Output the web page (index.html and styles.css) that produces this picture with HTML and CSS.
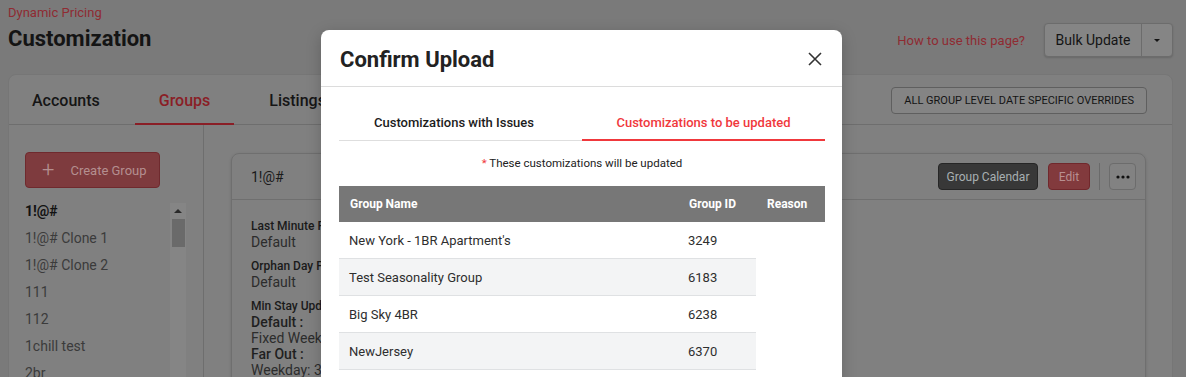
FILE: index.html
```html
<!DOCTYPE html>
<html lang="en">
<head>
    <meta charset="UTF-8">
    <meta name="viewport" content="width=device-width, initial-scale=1.0">
    <title>Customization</title>
    <link rel="stylesheet" href="styles.css">
</head>
<body>
    <div class="page">
        <div class="page-header">
            <div>
                <div class="crumb">Dynamic Pricing</div>
                <h1>Customization</h1>
            </div>
            <div class="header-actions">
                <a class="help-link" href="#">How to use this page?</a>
                <div class="split-btn">
                    <button class="split-main">Bulk Update</button>
                    <button class="split-caret"><span class="caret"></span></button>
                </div>
            </div>
        </div>

        <div class="main-card">
            <div class="tabs">
                <div class="tab">Accounts</div>
                <div class="tab active">Groups</div>
                <div class="tab">Listings</div>
                <button class="override-btn">All Group Level Date Specific Overrides</button>
            </div>
            <div class="main-body">
                <div class="sidebar">
                    <button class="create-btn"><span class="plus">+</span>Create Group</button>
                    <div class="group-list">
                        <ul>
                            <li class="selected">1!@#</li>
                            <li>1!@# Clone 1</li>
                            <li>1!@# Clone 2</li>
                            <li>111</li>
                            <li>112</li>
                            <li>1chill test</li>
                            <li>2br</li>
                        </ul>
                        <div class="scrollbar">
                            <span class="scroll-up"></span>
                            <span class="scroll-thumb"></span>
                        </div>
                    </div>
                </div>
                <div class="content">
                    <div class="group-card">
                        <div class="group-card-header">
                            <span>1!@#</span>
                            <div class="group-actions">
                                <button class="btn-dark">Group Calendar</button>
                                <button class="btn-red">Edit</button>
                                <span class="vsep"></span>
                                <button class="btn-more">
                                    <svg width="14" height="4" viewBox="0 0 14 4">
                                        <circle cx="2" cy="2" r="1.6" fill="#111"/>
                                        <circle cx="7" cy="2" r="1.6" fill="#111"/>
                                        <circle cx="12" cy="2" r="1.6" fill="#111"/>
                                    </svg>
                                </button>
                            </div>
                        </div>
                        <div class="group-card-body">
                            <div class="field-label">Last Minute Prices</div>
                            <div class="field-value">Default</div>
                            <div class="field-label">Orphan Day Prices</div>
                            <div class="field-value">Default</div>
                            <div class="field-label">Min Stay Updates</div>
                            <div class="field-value strong">Default :</div>
                            <div class="field-value">Fixed Weekday</div>
                            <div class="field-value strong">Far Out :</div>
                            <div class="field-value">Weekday: 3</div>
                        </div>
                    </div>
                </div>
            </div>
        </div>
    </div>

    <div class="modal">
        <div class="modal-header">
            <h2>Confirm Upload</h2>
            <svg class="close" width="14" height="14" viewBox="0 0 14 14">
                <path d="M1 1 L13 13 M13 1 L1 13" stroke="#333" stroke-width="1.6" fill="none"/>
            </svg>
        </div>
        <div class="modal-body">
            <div class="modal-tabs">
                <div class="modal-tab">Customizations with Issues</div>
                <div class="modal-tab active">Customizations to be updated</div>
            </div>
            <p class="note"><span class="star">*</span> These customizations will be updated</p>
            <table class="result-table">
                <thead>
                    <tr>
                        <th class="col-name">Group Name</th>
                        <th class="col-id">Group ID</th>
                        <th>Reason</th>
                    </tr>
                </thead>
                <tbody>
                    <tr><td>New York - 1BR Apartment's</td><td>3249</td></tr>
                    <tr><td>Test Seasonality Group</td><td>6183</td></tr>
                    <tr><td>Big Sky 4BR</td><td>6238</td></tr>
                    <tr><td>NewJersey</td><td>6370</td></tr>
                    <tr><td>Ocean View</td><td>6412</td></tr>
                </tbody>
            </table>
        </div>
    </div>
</body>
</html>
```

FILE: styles.css
```css
html, body {
    margin: 0;
    height: 100%;
    overflow: hidden;
}
body {
    font-family: Roboto, "Liberation Sans", sans-serif;
    background-color: #7a7a7a;
    color: #161616;
}
button {
    font-family: inherit;
    cursor: pointer;
}
.page {
    padding: 5px 13px 0 8px;
}
.page-header {
    display: flex;
    justify-content: space-between;
    align-items: flex-start;
    height: 69px;
}
.crumb {
    font-size: 13px;
    color: #8f2b32;
    line-height: 16px;
}
h1 {
    margin: 6px 0 0;
    font-size: 22px;
    font-weight: 700;
    color: #141414;
    line-height: 24px;
}
.header-actions {
    display: flex;
    align-items: center;
    gap: 19px;
    margin-top: 18px;
}
.help-link {
    color: #8f2b32;
    font-size: 13px;
    text-decoration: none;
}
.split-btn {
    display: flex;
    border: 1px solid #6c6c6c;
    border-radius: 4px;
    background-color: #858585;
    height: 32px;
    box-shadow: 0 1px 2px rgba(0, 0, 0, 0.15);
}
.split-btn button {
    border: none;
    background: none;
    color: #141414;
    font-size: 14px;
}
.split-main {
    width: 97px;
    border-right: 1px solid #6c6c6c !important;
}
.split-caret {
    width: 30px;
    display: flex;
    align-items: center;
    justify-content: center;
}
.caret {
    border-left: 3px solid transparent;
    border-right: 3px solid transparent;
    border-top: 3px solid #141414;
}
.main-card {
    background-color: #808080;
    border: 1px solid #767676;
    border-radius: 8px;
    height: 320px;
    overflow: hidden;
}
.tabs {
    display: flex;
    align-items: stretch;
    gap: 12px;
    height: 49px;
    border-bottom: 1px solid #6e6e6e;
}
.tab {
    padding: 3px 23px 0;
    display: flex;
    align-items: center;
    font-size: 16px;
    font-weight: 500;
    color: #151515;
    border-bottom: 2px solid transparent;
    margin-bottom: -1px;
}
.tab.active {
    color: #8a1e26;
    border-bottom-color: #8a1e26;
    padding: 3px 24px 0;
}
.override-btn {
    margin: 12px 25px 0 auto;
    height: 27px;
    padding: 0 12px;
    border: 1px solid #5f5f5f;
    border-radius: 4px;
    background-color: #848484;
    color: #141414;
    font-size: 11px;
    text-transform: uppercase;
}
.main-body {
    display: flex;
    height: 100%;
}
.sidebar {
    width: 195px;
    border-right: 1px solid #6e6e6e;
    padding: 27px 0 0 16px;
    box-sizing: border-box;
}
.create-btn {
    width: 135px;
    height: 36px;
    border: 1px solid #6f2a2e;
    border-radius: 4px;
    background-color: #7e3b3e;
    color: #b48f90;
    font-size: 13px;
    display: flex;
    align-items: center;
    padding: 0 0 0 16px;
}
.plus {
    font-size: 22px;
    font-weight: 300;
    margin-right: 16px;
    line-height: 1;
}
.group-list {
    display: flex;
    margin-top: 15px;
}
.group-list ul {
    list-style: none;
    margin: 0;
    padding: 0;
    width: 145px;
}
.group-list li {
    height: 27px;
    line-height: 17px;
    font-size: 14px;
    color: #3b3b3b;
}
.group-list li.selected {
    color: #121212;
    font-weight: 700;
}
.scrollbar {
    width: 16px;
    height: 200px;
    background-color: #858585;
    display: flex;
    flex-direction: column;
    align-items: center;
}
.scroll-up {
    margin-top: 6px;
    border-left: 4px solid transparent;
    border-right: 4px solid transparent;
    border-bottom: 4px solid #2a2a2a;
}
.scroll-thumb {
    margin-top: 6px;
    width: 13px;
    height: 28px;
    background-color: #6a6a6a;
}
.content {
    flex: 1;
    padding: 28px 26px 0 27px;
}
.group-card {
    border: 1px solid #6f6f6f;
    border-radius: 8px;
    height: 400px;
    box-shadow: 0 1px 3px rgba(0, 0, 0, 0.15);
}
.group-card-header {
    height: 45px;
    border-bottom: 1px solid #6f6f6f;
    display: flex;
    align-items: center;
    justify-content: space-between;
    padding: 0 9px 0 19px;
    font-size: 14px;
    color: #1a1a1a;
}
.group-actions {
    display: flex;
    align-items: center;
    gap: 9px;
}
.group-actions button {
    height: 27px;
    border-radius: 4px;
    font-size: 12px;
}
.btn-dark {
    width: 100px;
    background-color: #383838;
    border: 1px solid #262626;
    color: #a8b0b2;
}
.btn-red {
    width: 42px;
    margin-left: 1px;
    background-color: #823a3d;
    border: 1px solid #70282c;
    color: #b88f91;
}
.vsep {
    width: 1px;
    height: 27px;
    background-color: #6a6a6a;
}
.btn-more {
    width: 27px;
    background-color: #828282;
    border: 1px solid #6c6c6c;
    padding: 0;
    display: flex;
    align-items: center;
    justify-content: center;
}
.group-card-body {
    padding: 18px 19px;
}
.field-label {
    font-size: 12px;
    font-weight: 500;
    color: #1a1a1a;
    line-height: 16px;
}
.field-value {
    font-size: 14px;
    color: #2c2c2c;
    line-height: 16px;
    margin-bottom: 8px;
}
.field-value.strong {
    font-weight: 500;
    color: #1f1f1f;
    margin-bottom: 0;
}
.field-value.strong + .field-value {
    margin-bottom: 0;
}

/* modal */
.modal {
    position: absolute;
    left: 321px;
    top: 30px;
    width: 521px;
    height: 420px;
    background-color: #fff;
    border-radius: 8px;
    box-shadow: 0 4px 16px rgba(0, 0, 0, 0.2);
}
.modal-header {
    height: 56px;
    border-bottom: 1px solid #dcdcdc;
    display: flex;
    align-items: center;
    justify-content: space-between;
    padding: 0 20px 0 19px;
}
.modal-header h2 {
    margin: 2px 0 0;
    font-size: 22px;
    font-weight: 700;
    color: #222;
}
.close {
    margin-top: 2px;
}
.modal-body {
    padding: 0 17px 0 18px;
}
.modal-tabs {
    display: flex;
    margin-top: 19px;
    border-bottom: 1px solid #dedede;
}
.modal-tab {
    width: 50%;
    box-sizing: border-box;
    text-align: center;
    height: 35px;
    line-height: 33px;
    font-size: 13px;
    font-weight: 500;
    color: #1c1c1c;
    border-bottom: 2px solid transparent;
    margin-bottom: -1px;
}
.modal-tab:first-child {
    padding-right: 13px;
}
.modal-tab.active {
    color: #f0383c;
    border-bottom-color: #f0383c;
}
.note {
    margin: 14px 0 0;
    text-align: center;
    font-size: 11.5px;
    color: #222;
    line-height: 16px;
}
.star {
    color: #f0383c;
}
.result-table {
    margin-top: 15px;
    width: 100%;
    border-collapse: collapse;
}
.result-table th {
    background-color: #777;
    color: #fff;
    font-size: 12px;
    font-weight: 700;
    text-align: left;
    height: 36px;
    padding: 0 11px;
}
.result-table .col-name {
    width: 317px;
}
.result-table .col-id {
    width: 56px;
}
.result-table td {
    height: 36px;
    padding: 0 10px;
    font-size: 13px;
    color: #2e2e2e;
    border-bottom: 1px solid #dfe1e3;
}
.result-table tbody tr:nth-child(even) td {
    background-color: #f3f4f5;
}
```
